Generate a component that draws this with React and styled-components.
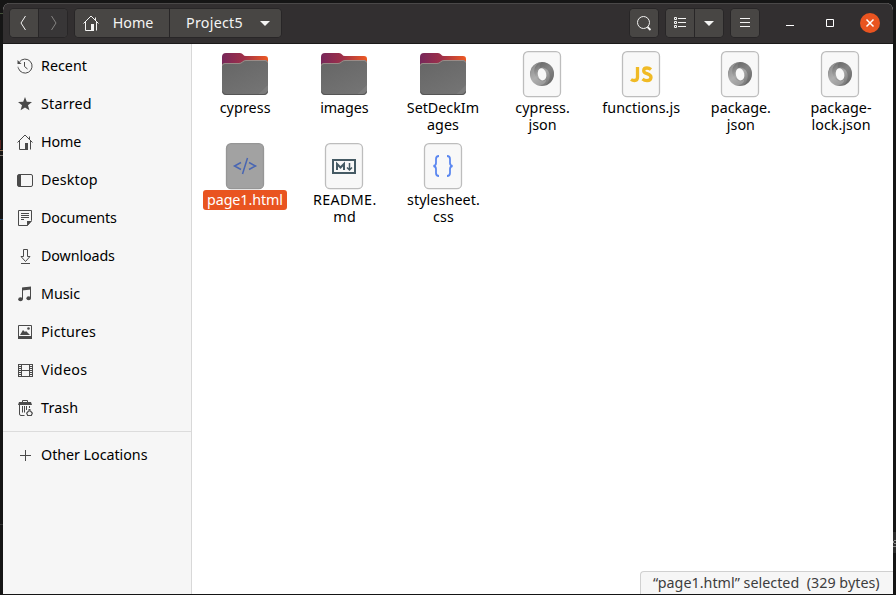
import React from "react";
import styled, { createGlobalStyle, css } from "styled-components";

const GlobalStyle = createGlobalStyle`
  * { box-sizing: border-box; }
  html, body { margin: 0; background: #151515; overflow: hidden; }
  body { font-family: "Noto Sans", "Open Sans", sans-serif; font-size: 14.3px; color: #000; }
`;

const Desktop = styled.div`
  width: 896px;
  height: 595px;
  padding: 3px 3px 1px;
  background:
    linear-gradient(#44503a, #44503a) 0 13px / 3px 1px no-repeat,
    linear-gradient(#5b2420, #5b2420) 0 140px / 1px 9px no-repeat,
    linear-gradient(#8a6a50, #8a6a50) 0 150px / 3px 1px no-repeat,
    linear-gradient(#77706a, #77706a) 0 155px / 3px 1px no-repeat,
    linear-gradient(#2f5070, #2f5070) 0 219px / 3px 1px no-repeat,
    linear-gradient(#333, #333) 0 524px / 3px 1px no-repeat,
    linear-gradient(#8b8b8b, #8b8b8b) 894px 540px / 2px 1px no-repeat,
    linear-gradient(#8b8b8b, #8b8b8b) 893px 541px / 1px 2px no-repeat,
    linear-gradient(#8b8b8b, #8b8b8b) 894px 543px / 2px 1px no-repeat,
    linear-gradient(#8b8b8b, #8b8b8b) 893px 546px / 3px 1px no-repeat,
    linear-gradient(#2d2d2d, #2d2d2d) 893px 532px / 3px 21px no-repeat,
    #151515;
`;

const Window = styled.div`
  height: 591px;
  display: flex;
  flex-direction: column;
  border-radius: 7px 7px 0 0;
  overflow: hidden;
  background: #fff;
`;

const HeaderBar = styled.header`
  flex: 0 0 41px;
  display: flex;
  align-items: flex-start;
  padding: 6px 13px 0 7px;
  background: #322f30;
  border-bottom: 1px solid #1b1a1a;
  box-shadow: inset 0 1px #4a4848;
  color: #f2f2f2;
`;

const ButtonGroup = styled.div`
  display: flex;
  height: 28px;
  margin-right: ${(p) => p.$gap || 0}px;
  border-radius: 4px;
  box-shadow: 0 0 0 1px #282627;
  overflow: hidden;
  background: #484644;
`;

const HeaderButton = styled.button`
  width: ${(p) => p.$width || 28}px;
  height: 28px;
  padding: 0;
  border: 0;
  display: flex;
  align-items: center;
  justify-content: center;
  background: ${(p) => (p.$disabled ? "#383637" : "#484644")};
  color: ${(p) => (p.$disabled ? "#858483" : "#f4f4f3")};
  font: inherit;
  & + & { border-left: 1px solid #282627; }
`;

const PathLabel = styled.span`
  letter-spacing: ${(p) => p.$spacing || 0}px;
  line-height: 20px;
  margin: 0 ${(p) => p.$right}px 0 ${(p) => p.$left}px;
`;

const Spacer = styled.div`flex: 1;`;

const WindowControls = styled.div`
  display: flex;
  align-items: center;
  height: 28px;
  gap: 20px;
`;

const ControlButton = styled.button`
  width: 20px;
  height: 20px;
  padding: 0;
  border: 0;
  border-radius: 50%;
  display: flex;
  color: #fff;
  background: ${(p) => (p.$close ? "#e95420" : "transparent")};
`;

const Body = styled.div`
  flex: 1;
  display: flex;
  min-height: 0;
`;

const Sidebar = styled.nav`
  flex: 0 0 189px;
  padding-top: 3px;
  background: #f6f6f6;
  border-right: 1px solid #d8d8d8;
`;

const Place = styled.div`
  display: flex;
  align-items: center;
  height: 38px;
  padding-left: 14px;
  gap: 8px;
  color: #4a4a4a;
`;

const PlaceName = styled.span`
  color: #000;
  line-height: 20px;
  letter-spacing: ${(p) => p.$spacing || 0}px;
`;

const Divider = styled.div`
  height: 1px;
  margin: 4px 0;
  background: #dcdcdc;
`;

const Content = styled.main`
  flex: 1;
  display: flex;
  flex-direction: column;
  justify-content: space-between;
`;

const FileGrid = styled.div`
  display: grid;
  grid-template-columns: repeat(7, 99.15px);
  grid-auto-rows: 92px;
  padding: 6px 0 0 3.1px;
`;

const FileCell = styled.div`
  display: flex;
  flex-direction: column;
  align-items: center;
`;

const FileName = styled.span`
  padding: 1px 4px 2px;
  border-radius: 3px;
  line-height: 17px;
  text-align: center;
  white-space: pre;
  letter-spacing: ${(p) => p.$spacing || 0}px;
  margin-left: ${(p) => p.$shift || 0}px;
  ${(p) => p.$selected && css`
    background: #e95420;
    color: #fff;
  `}
`;

const StatusBar = styled.div`
  align-self: flex-end;
  width: 253px;
  height: 23px;
  padding-left: 12px;
  border: 1px solid #d0d0d0;
  border-width: 1px 0 0 1px;
  border-radius: 4px 0 0 0;
  background: #f6f6f6;
  color: #3d3d3d;
  line-height: 22px;
  white-space: pre;
  letter-spacing: 0.02px;
`;

const Icon = ({ children, size = 16 }) => (
  <svg width={size} height={size} viewBox={`0 0 ${size} ${size}`} fill="none" stroke="currentColor" strokeWidth="1">
    {children}
  </svg>
);

const HomeShape = () => (
  <>
    <path d="M.5 8.500 8 1l7.500 7.500M12.500 5V2.500" />
    <path d="M2.500 7v8.500H9M13.500 7v8.500" />
    <path d="M8 9h3v7H8z" fill="currentColor" stroke="none" />
  </>
);

const placeIcons = {
  recent: (
    <>
      <path d="M2.4 4a7 7 0 1 1-1 6.2" />
      <path d="M1.3 10.2A7 7 0 0 1 1 8" strokeDasharray="1 1" />
      <path d="M.5 2v4h4z" fill="currentColor" stroke="none" />
      <path d="M7.5 4v4.5L10.5 11" />
    </>
  ),
  starred: <path d="m8 1 1.8 4.8 5.2.2-4 3.2 1.4 5L8 11.4l-4.4 2.8L5 9.2 1 6l5.2-.2z" fill="currentColor" stroke="none" />,
  home: <HomeShape />,
  desktop: (
    <>
      <rect x=".5" y="2.5" width="15" height="12" rx="1.5" />
      <path d="M1 3h3v11H1z" fill="currentColor" stroke="none" />
    </>
  ),
  documents: (
    <>
      <path d="M1.5.5h13v10l-4 5h-9z" />
      <path d="M4 3.5h8M4 5.5h8M4 7.5h8M4 9.5h3" />
      <path d="M10 16v-5h5z" fill="currentColor" stroke="none" />
    </>
  ),
  downloads: (
    <>
      <path d="M6.5 1.5h4v7H13l-4.500 5-4.500-5h2.500z" />
      <path d="M4 15.5h9" />
    </>
  ),
  music: (
    <>
      <path d="M5.5 13V2.5l8-1V12" />
      <path d="M5 1.6 14 .5v3L5 4.6z" fill="currentColor" stroke="none" />
      <ellipse cx="3.5" cy="13.3" rx="2.3" ry="2" fill="currentColor" stroke="none" />
      <ellipse cx="11.7" cy="12.3" rx="2.3" ry="2" fill="currentColor" stroke="none" />
    </>
  ),
  pictures: (
    <>
      <path d="M1.5 1.5h13v13h-13z" />
      <path d="M1 12h14v3H1zM3 11l3-5 2 2 1-1 4 4z" fill="currentColor" stroke="none" />
      <circle cx="11.5" cy="4.5" r="1.3" fill="currentColor" stroke="none" />
    </>
  ),
  videos: (
    <>
      <path d="M4.5 2v13M12.5 2v13M4 2.5h9M4 8.5h9M4 14.5h9" />
      <path d="M1.5 2v13M15.5 2v13" />
      <path d="M3 2v13M14 2v13" strokeDasharray="1 1" strokeWidth="2" />
    </>
  ),
  trash: (
    <>
      <path d="M5.500 2.500v-2h5v2" />
      <path d="M2 2h12l1 3H1z" fill="currentColor" stroke="none" />
      <path d="M2.500 5v9q0 1.500 1.500 1.500h3.500M5.500 6v6.500M7.500 6v6.500M9.500 6v4M12.500 6v2" />
      <path d="M12.500 9v1.500" strokeWidth="2" />
      <path d="M11.500 11h2l1.800 2.200-1 2.300h-3.600l-1-2.300z" strokeWidth="1.200" />
    </>
  ),
  other: <path d="M3 8.5h11M8.5 3v11" />,
};

const places = [
  ["recent", "Recent", 0],
  ["starred", "Starred", 0.2],
  ["home", "Home", -0.1],
  ["desktop", "Desktop", 0.15],
  ["documents", "Documents", -0.15],
  ["downloads", "Downloads", -0.12],
  ["music", "Music", -0.05],
  ["pictures", "Pictures", 0.15],
  ["videos", "Videos", 0.3],
  ["trash", "Trash", 0.15],
];

const FolderIcon = () => (
  <svg width="48" height="48" viewBox="0 0 48 48">
    <defs>
      <linearGradient id="folderBack">
        <stop offset="0" stopColor="#77275a" />
        <stop offset=".48" stopColor="#a03048" />
        <stop offset="1" stopColor="#ef5a22" />
      </linearGradient>
      <linearGradient id="folderFront" x2=".6" y2="1">
        <stop offset="0" stopColor="#656565" />
        <stop offset="1" stopColor="#737373" />
      </linearGradient>
    </defs>
    <g transform="translate(0 1)">
      <path d="M1 6q0-4 4-4h14q2 0 3 1.500T25 5h19q3 0 3 3v10H1z" fill="url(#folderBack)" />
      <path d="M1 15q0-3 3-3h14q2 0 3.500-1.500T25 9h19q3 0 3 3v28q0 4-4 4H5q-4 0-4-4z" fill="url(#folderFront)" />
      <path d="M1.500 14.500q0-2 2.500-2h14q2 0 3.500-1.500T25 9.500h19q2.500 0 2.500 2" fill="none" stroke="#9a8b87" />
      <path d="M37 43.500 47 34v6q0 3.500-4 3.500z" fill="#7c7c7c" />
      <path d="M1.500 40.500q.5 3 3.500 3h38q3 0 3.500-3" fill="none" stroke="#555" />
    </g>
  </svg>
);

const fileGlyphs = {
  json: (
    <>
      <circle cx="24" cy="24" r="12" fill="url(#ring)" />
      <path d="M24 12C16 13 14 23 19 28c3 4 8 4 9 1 1 4-4 7-9 6-6-2-8-9-6-15 2-5 6-8 11-8z" fill="#b4b4b4" opacity=".5" />
      <path d="M24 12c8 0 13 7 12 13-1 5-4 9-8 10 5-5 5-13 0-16-2-2-5-2-6 0-1-3 0-6 2-7z" fill="#5f5f5f" opacity=".5" />
      <ellipse cx="24" cy="24.300" rx="4.200" ry="6.200" fill="#f7f7f7" transform="rotate(-12 24 24)" />
    </>
  ),
  js: (
    <g fill="none" stroke="#f0ba25" strokeWidth="3.300">
      <path d="M20.500 17v10.300q0 3.200-3 3.200-2 0-3.500-1" />
      <path d="M34 19.500q-1.800-1.500-4-1.500-3.300 0-3.300 2.700 0 2 3.300 3 4 1.300 4 3.600 0 3.300-4 3.300-2.700 0-4.500-1.600" />
    </g>
  ),
  html: <path d="m20 20.500-6.500 3.500 6.500 3.500M28 20.500l6.500 3.500-6.500 3.500M26.500 16l-5 16" fill="none" stroke="#4966b3" strokeWidth="1.500" />,
  md: (
    <>
      <rect x="13" y="18" width="22" height="13" fill="none" stroke="#455a64" strokeWidth="2" />
      <path d="M17 28v-6l3.500 3.500L24 22v6" fill="none" stroke="#455a64" strokeWidth="2" />
      <path d="M29.500 21v6M27 25.500l2.500 2.500 2.500-2.500" fill="none" stroke="#455a64" strokeWidth="1.500" />
    </>
  ),
  css: (
    <g fill="none" stroke="#5b87f0" strokeWidth="1.800">
      <path d="M20 14q-3 0-3 3v4q0 2.500-2.500 3 2.500.500 2.500 3v4q0 3 3 3" />
      <path d="M28 14q3 0 3 3v4q0 2.500 2.500 3-2.500.500-2.500 3v4q0 3-3 3" />
    </g>
  ),
};

const DocumentIcon = ({ type, selected }) => (
  <svg width="48" height="48" viewBox="0 0 48 48">
    <defs>
      <linearGradient id="ring" x2=".7" y2="1">
        <stop offset="0" stopColor="#555" />
        <stop offset=".55" stopColor="#aaa" />
        <stop offset="1" stopColor="#747474" />
      </linearGradient>
    </defs>
    <rect x="5.500" y="1.700" width="37" height="45" rx="4.500" fill={selected ? "#a2a2a2" : "#f8f8f8"} stroke={selected ? "#969696" : "#bdbdbd"} strokeWidth="1.300" />
    {fileGlyphs[type]}
  </svg>
);

const files = [
  { type: "folder", name: "cypress", spacing: 0.1, shift: 1 },
  { type: "folder", name: "images", spacing: -0.1, shift: 1 },
  { type: "folder", name: "SetDeckIm\nages" },
  { type: "json", name: "cypress.\njson", spacing: 0.05, shift: 1 },
  { type: "js", name: "functions.js", spacing: 0.08 },
  { type: "json", name: "package.\njson", shift: 1 },
  { type: "json", name: "package-\nlock.json", spacing: 0.05, shift: 3 },
  { type: "html", name: "page1.html", selected: true, spacing: -0.08, shift: 0.6 },
  { type: "md", name: "README.\nmd", spacing: 0.35, shift: 2 },
  { type: "css", name: "stylesheet.\ncss", spacing: 0.1, shift: 1 },
];

export default function App() {
  return (
    <>
      <GlobalStyle />
      <Desktop>
        <Window>
          <HeaderBar>
            <ButtonGroup $gap={8}>
              <HeaderButton aria-label="Back">
                <Icon><path d="M9.500 1 5 8l4.500 7" /></Icon>
              </HeaderButton>
              <HeaderButton aria-label="Forward" $width={29} $disabled>
                <Icon><path d="M6.500 1 11 8l-4.500 7" /></Icon>
              </HeaderButton>
            </ButtonGroup>
            <ButtonGroup>
              <HeaderButton $width={94}>
                <Icon><HomeShape /></Icon>
                <PathLabel $left={14} $right={8} $spacing={-0.1}>Home</PathLabel>
              </HeaderButton>
              <HeaderButton $width={112}>
                <PathLabel $left={8} $right={14} $spacing={0.25}>Project5</PathLabel>
                <Icon><path d="M3 6h10l-5 5z" fill="currentColor" stroke="none" /></Icon>
              </HeaderButton>
            </ButtonGroup>
            <Spacer />
            <ButtonGroup $gap={8}>
              <HeaderButton aria-label="Search">
                <Icon><circle cx="7.500" cy="7.500" r="6" /><path d="m11.500 12 3 3" strokeWidth="1.800" /></Icon>
              </HeaderButton>
            </ButtonGroup>
            <ButtonGroup $gap={8}>
              <HeaderButton aria-label="List view">
                <Icon>
                  <path d="M2.500 2.500h2v2h-2zM2.500 6.500h2v2h-2zM2.500 10.500h2v2h-2zM6 3.500h8M6 7.500h8M6 11.500h8" />
                </Icon>
              </HeaderButton>
              <HeaderButton aria-label="View options" $width={29}>
                <Icon><path d="M3 6h10l-5 5z" fill="currentColor" stroke="none" /></Icon>
              </HeaderButton>
            </ButtonGroup>
            <ButtonGroup $gap={21}>
              <HeaderButton aria-label="Menu">
                <Icon><path d="M3 3.500h10M3 7.500h10M3 11.500h10" /></Icon>
              </HeaderButton>
            </ButtonGroup>
            <WindowControls>
              <ControlButton aria-label="Minimize"><Icon size={20}><path d="M6 12.500h8" /></Icon></ControlButton>
              <ControlButton aria-label="Maximize"><Icon size={20}><path d="M6.500 6.500h7v7h-7z" /></Icon></ControlButton>
              <ControlButton aria-label="Close" $close><Icon size={20}><path d="m6.500 6.500 7 7m0-7-7 7" strokeWidth="1.500" /></Icon></ControlButton>
            </WindowControls>
          </HeaderBar>
          <Body>
            <Sidebar>
              {places.map(([id, name, spacing]) => (
                <Place key={id}><Icon>{placeIcons[id]}</Icon><PlaceName $spacing={spacing}>{name}</PlaceName></Place>
              ))}
              <Divider />
              <Place><Icon>{placeIcons.other}</Icon><PlaceName $spacing={-0.04}>Other Locations</PlaceName></Place>
            </Sidebar>
            <Content>
              <FileGrid>
                {files.map(({ type, name, selected, spacing, shift }) => (
                  <FileCell key={name}>
                    {type === "folder" ? <FolderIcon /> : <DocumentIcon type={type} selected={selected} />}
                    <FileName $selected={selected} $spacing={spacing} $shift={shift}>{name}</FileName>
                  </FileCell>
                ))}
              </FileGrid>
              <StatusBar>“page1.html” selected  (329 bytes)</StatusBar>
            </Content>
          </Body>
        </Window>
      </Desktop>
    </>
  );
}
